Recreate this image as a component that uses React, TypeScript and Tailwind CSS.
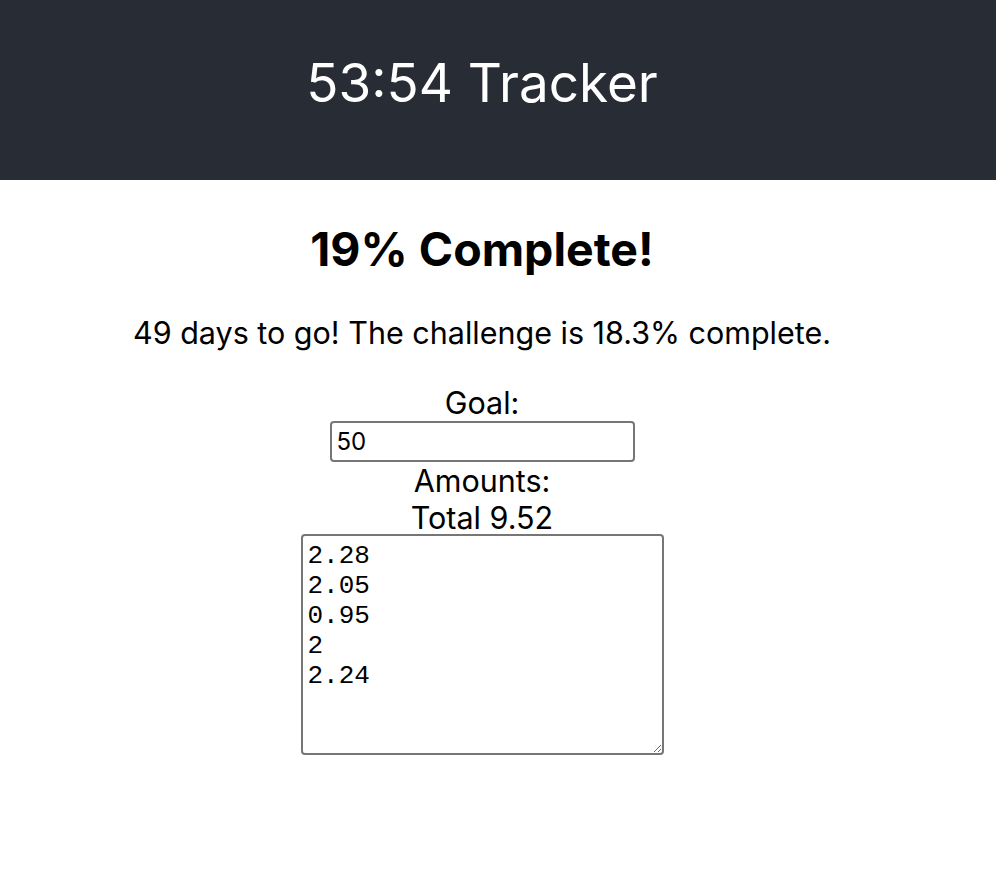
import { useState } from "react";

export default function App() {
  const [goal, setGoal] = useState<string>("50");
  const [amounts, setAmounts] = useState<string>("2.28\n2.05\n0.95\n2\n2.24");

  const total = amounts
    .split("\n")
    .map((a) => parseFloat(a))
    .filter((n) => !isNaN(n))
    .reduce((s, n) => s + n, 0);
  const pct = Math.round((total / (parseFloat(goal) || 1)) * 100);

  return (
    <div className="min-h-[870px] bg-white font-['Inter','Helvetica',sans-serif] text-black">
      <header className="flex h-[180px] items-center justify-center bg-[#282c34] pb-[12px] pr-8">
        <h1 className="text-[53px] font-normal text-white">53:54 Tracker</h1>
      </header>
      <main className="flex flex-col items-center pr-8 text-center">
        <h2 className="mt-[41px] text-[46.5px] font-bold leading-[56px]">{pct}% Complete!</h2>
        <p className="mt-[37px] text-[30.5px] leading-[37px]">
          49 days to go! The challenge is 18.3% complete.
        </p>
        <label className="mt-[33px] text-[30.5px] leading-[37px]">Goal:</label>
        <input
          value={goal}
          onChange={(e) => setGoal(e.target.value)}
          className="h-[41px] w-[305px] rounded-[4px] border-2 border-[#767676] px-[5px] text-[24px] outline-none"
        />
        <label className="text-[30.5px] leading-[37px]">Amounts:</label>
        <div className="text-[30.5px] leading-[37px]">Total {total.toFixed(2)}</div>
        <textarea
          value={amounts}
          onChange={(e) => setAmounts(e.target.value)}
          className="-mt-[2px] h-[221px] w-[363px] rounded-[4px] border-2 border-[#767676] px-[5px] pb-[1px] pt-[5px] font-['Liberation_Mono',monospace] text-[26px] leading-[30px] outline-none"
        />
      </main>
    </div>
  );
}
